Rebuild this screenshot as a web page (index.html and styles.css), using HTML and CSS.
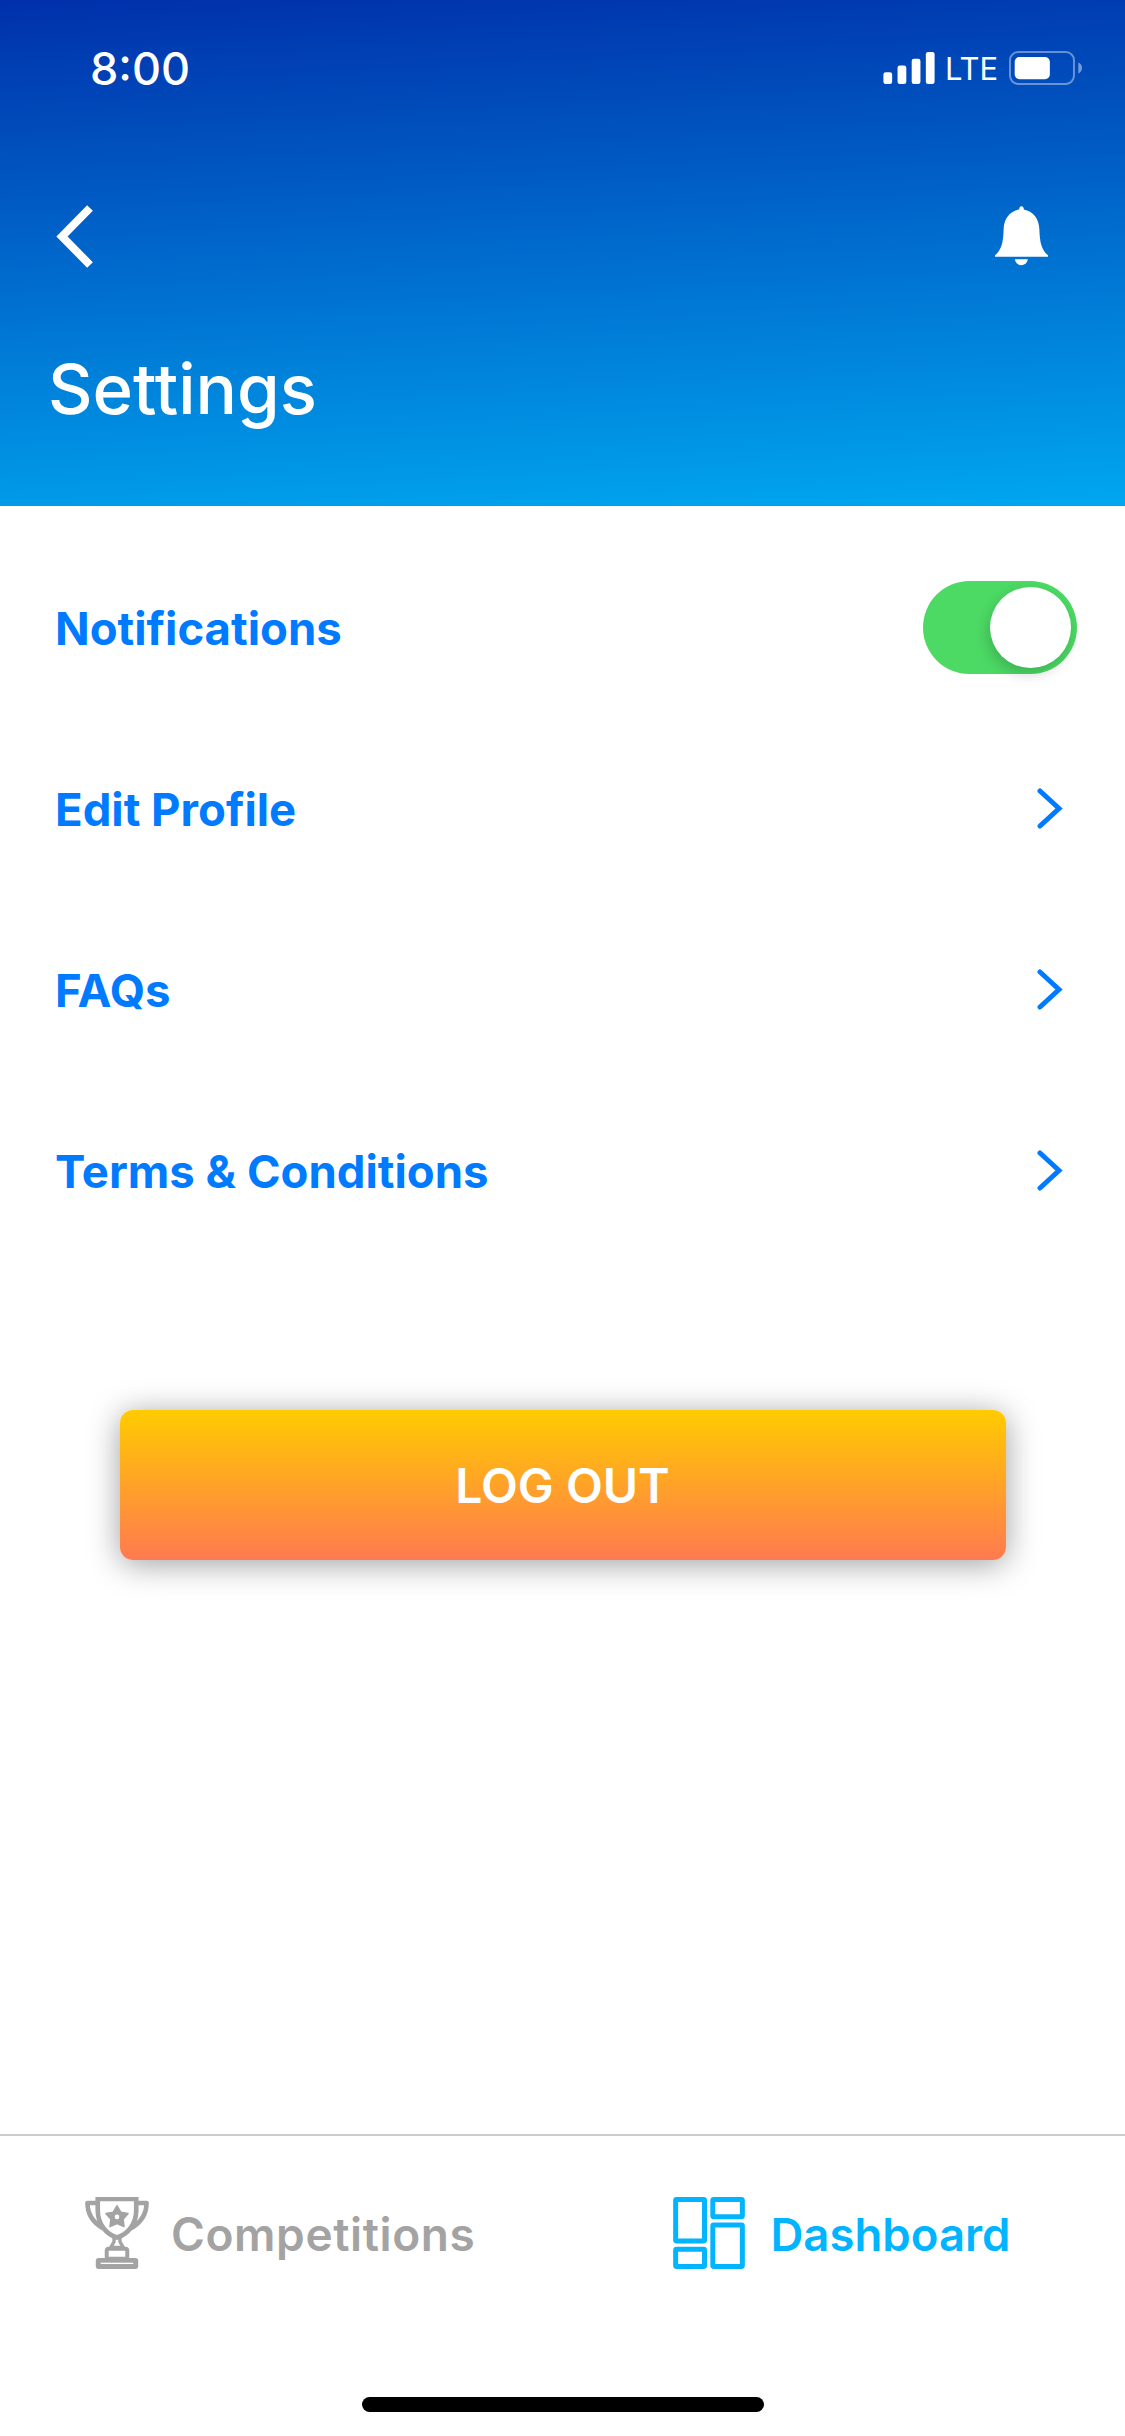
FILE: index.html
```html
<!DOCTYPE html>
<html lang="en">
<head>
<meta charset="UTF-8">
<meta name="viewport" content="width=device-width, initial-scale=1.0">
<title>Settings</title>
<link rel="stylesheet" href="styles.css">
</head>
<body>
<div class="page">

  <div class="header">
    <div class="status-bar">
      <span class="time">8:00</span>
      <div class="status-icons">
        <svg class="signal" viewBox="247 70 152 95" fill="#fff">
          <rect x="247" y="130" width="26" height="35" rx="7"/>
          <rect x="289" y="110" width="26" height="55" rx="7"/>
          <rect x="331" y="90" width="26" height="75" rx="7"/>
          <rect x="373" y="70" width="26" height="95" rx="7"/>
        </svg>
        <span class="lte">LTE</span>
        <svg class="battery" viewBox="628 66 218 101">
          <rect x="631" y="69" width="191" height="95" rx="24" fill="none" stroke="#fff" stroke-opacity="0.4" stroke-width="6"/>
          <rect x="645" y="84" width="105" height="66" rx="14" fill="#fff"/>
          <path d="M835 100 C843 103 846 109 846 116 C846 123 843 130 835 133 Z" fill="#fff" fill-opacity="0.45"/>
        </svg>
      </div>
    </div>
    <div class="nav">
      <svg class="back" viewBox="0 0 40 70"><polyline points="36,7 8,35.5 36,64" fill="none" stroke="#fff" stroke-width="8"/></svg>
      <svg class="bell" viewBox="585 528 160 180" fill="#fff">
        <path d="M665 528 C670 528 672 533 672 538 C700 543 718 565 719 598 C720 635 725 660 745 676 L745 681 L585 681 L585 676 C605 660 610 635 611 598 C612 565 630 543 658 538 C658 533 660 528 665 528 Z"/>
        <path d="M645 688 L684 688 C680 712 649 712 645 688 Z"/>
      </svg>
    </div>
    <h1 class="title">Settings</h1>
  </div>

  <div class="menu">
    <div class="menu-row">
      <span>Notifications</span>
      <div class="toggle"><div class="knob"></div></div>
    </div>
    <div class="menu-row">
      <span>Edit Profile</span>
      <svg class="chevron" viewBox="0 0 26 41"><polyline points="3,3 22,20.5 3,38" fill="none" stroke="#007aff" stroke-width="5" stroke-linecap="round" stroke-linejoin="miter"/></svg>
    </div>
    <div class="menu-row">
      <span>FAQs</span>
      <svg class="chevron" viewBox="0 0 26 41"><polyline points="3,3 22,20.5 3,38" fill="none" stroke="#007aff" stroke-width="5" stroke-linecap="round" stroke-linejoin="miter"/></svg>
    </div>
    <div class="menu-row">
      <span>Terms &amp; Conditions</span>
      <svg class="chevron" viewBox="0 0 26 41"><polyline points="3,3 22,20.5 3,38" fill="none" stroke="#007aff" stroke-width="5" stroke-linecap="round" stroke-linejoin="miter"/></svg>
    </div>
  </div>

  <button class="logout">LOG OUT</button>

  <div class="tab-bar">
    <div class="tab tab-competitions">
      <svg class="tab-icon" viewBox="105 110 192 217">
        <path d="M143 116 H259 V150 C259 190 235 222 201 232 C167 222 143 190 143 150 Z" fill="none" stroke="#a3a3a3" stroke-width="14"/>
        <path d="M143 128 H112 C112 160 125 185 160 205 M259 128 H290 C290 160 277 185 242 205" fill="none" stroke="#a3a3a3" stroke-width="14" stroke-linejoin="round"/>
        <path d="M201 137 L212 156 L234 160 L219 177 L222 199 L201 190 L180 199 L183 177 L168 160 L190 156 Z" fill="#a3a3a3" stroke="#a3a3a3" stroke-width="5" stroke-linejoin="round"/>
        <circle cx="201" cy="170" r="7" fill="#fff"/>
        <path d="M192 232 H210 V245 L220 262 H182 L192 245 Z" fill="none" stroke="#a3a3a3" stroke-width="10"/>
        <rect x="170" y="266" width="62" height="30" rx="6" fill="none" stroke="#a3a3a3" stroke-width="12"/>
        <rect x="137" y="294" width="128" height="33" rx="9" fill="#a3a3a3"/>
        <rect x="152" y="308" width="98" height="4" fill="#fff"/>
      </svg>
      <span>Competitions</span>
    </div>
    <div class="tab tab-dashboard">
      <svg class="tab-icon" viewBox="96 110 216 217" fill="none" stroke="#00b4ff" stroke-width="15">
        <rect x="103.5" y="117.5" width="87" height="125" rx="3"/>
        <rect x="215.5" y="117.5" width="89" height="52" rx="3"/>
        <rect x="103.5" y="267.5" width="87" height="52" rx="3"/>
        <rect x="215.5" y="194.5" width="89" height="125" rx="3"/>
      </svg>
      <span>Dashboard</span>
    </div>
  </div>

  <div class="home-indicator"></div>
</div>
</body>
</html>
```

FILE: styles.css
```css
* {
    box-sizing: border-box;
    margin: 0;
    padding: 0;
}
body {
    font-family: "Inter", "Noto Sans", sans-serif;
    background-color: #ffffff;
}
.page {
    display: flex;
    flex-direction: column;
    width: 1125px;
    height: 2436px;
    overflow: hidden;
}

/* Header */
.header {
    height: 506px;
    flex-shrink: 0;
    color: white;
    background: linear-gradient(177deg, #0030ab 0%, #00a7f0 100%);
}
.status-bar {
    display: flex;
    justify-content: space-between;
    align-items: center;
    height: 136px;
    padding: 0 43px 0 90px;
}
.time {
    font-size: 45px;
    font-weight: 500;
}
.status-icons {
    display: flex;
    align-items: center;
    gap: 12px;
}
.signal {
    width: 52px;
    height: 32px;
}
.lte {
    font-size: 31px;
    font-weight: 400;
    width: 52px;
    margin-left: -2px;
}
.battery {
    width: 73px;
    height: 34px;
}
.nav {
    display: flex;
    justify-content: space-between;
    align-items: center;
    height: 100px;
    margin-top: 50px;
    padding: 0 77px 0 54px;
}
.back {
    width: 40px;
    height: 70px;
}
.bell {
    width: 53px;
    height: 60px;
}
.title {
    font-size: 69px;
    font-weight: 500;
    line-height: 80px;
    margin-top: 63px;
    padding-left: 48px;
}

/* Menu */
.menu {
    margin-top: 31px;
}
.menu-row {
    display: flex;
    justify-content: space-between;
    align-items: center;
    height: 181px;
    padding: 0 48px 0 55px;
    font-size: 45.5px;
    font-weight: 700;
    color: #007aff;
}
.menu-row span {
    padding-top: 2px;
}
.chevron {
    width: 26px;
    height: 41px;
    margin-right: 14px;
}
.toggle {
    display: flex;
    justify-content: flex-end;
    align-items: center;
    width: 154px;
    height: 93px;
    padding-right: 6px;
    border-radius: 47px;
    background-color: #4cd964;
}
.knob {
    width: 81px;
    height: 81px;
    border-radius: 50%;
    background-color: #ffffff;
    box-shadow: -2px 6px 14px rgba(0,0,0,0.18);
}

/* Log out */
.logout {
    align-self: center;
    width: 886px;
    height: 150px;
    margin-top: 149px;
    border: none;
    border-radius: 13px;
    font-family: inherit;
    font-size: 48px;
    font-weight: 600;
    color: white;
    background: linear-gradient(180deg, #ffcb00 0%, #ff7a50 100%);
    box-shadow: 0 4px 32px rgba(0,0,0,0.38);
}

/* Tab bar */
.tab-bar {
    display: grid;
    grid-template-columns: 1fr 1fr;
    margin-top: auto;
    padding-top: 61px;
    border-top: 2px solid #cccccc;
}
.tab {
    display: flex;
    align-items: center;
    font-size: 46px;
    font-weight: 600;
}
.tab span {
    padding-top: 2px;
}
.tab-icon {
    height: 72px;
}
.tab-competitions {
    gap: 22px;
    padding-left: 85px;
    letter-spacing: 0.6px;
    color: #a3a3a3;
}
.tab-competitions .tab-icon {
    width: 64px;
}
.tab-dashboard {
    gap: 26px;
    padding-left: 110px;
    font-size: 45.5px;
    color: #00b4ff;
}
.tab-dashboard .tab-icon {
    width: 72px;
}
.home-indicator {
    align-self: center;
    width: 402px;
    height: 15px;
    margin-top: 128px;
    margin-bottom: 24px;
    border-radius: 8px;
    background-color: #000000;
}
```
